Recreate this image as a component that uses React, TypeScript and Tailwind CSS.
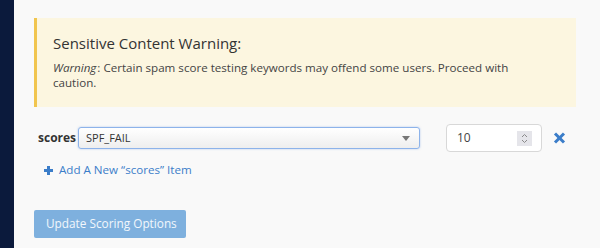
import React from 'react';

const ScoreRow: React.FC<{ label: string; value: string; score: number }> = ({ label, value, score }) => (
  <div className="flex items-center mt-[17px] pl-[4px]">
    <span className="w-[40px] shrink-0 text-[12px] font-bold text-[#333]">{label}</span>
    <div className="w-[342px] h-[22px] flex items-center justify-between pl-[7px] pr-[9px] border border-[#8db3ea] rounded-[3px] bg-gradient-to-b from-white to-[#eeeeee] shadow-[0_0_2px_rgba(100,150,230,0.5)]">
      <span className="text-[11px] text-[#333]">{value}</span>
      <span className="w-0 h-0 border-l-[4px] border-r-[4px] border-t-[5px] border-l-transparent border-r-transparent border-t-[#777]" />
    </div>
    <div className="ml-[26px] w-[96px] h-[28px] flex items-center justify-between pl-[10px] pr-[9px] bg-white border border-[#d8d8d8] rounded-[4px]">
      <span className="text-[12px] text-[#444]">{score}</span>
      <div className="w-[15px] h-[15px] bg-[#e5e5ea] flex flex-col items-center justify-center">
        <svg width="7" height="11" viewBox="0 0 7 11" fill="none" stroke="#8a8a8a" strokeWidth="1">
          <path d="M1 4 L3.5 1.5 L6 4" />
          <path d="M1 7 L3.5 9.5 L6 7" />
        </svg>
      </div>
    </div>
    <svg className="ml-[11px]" width="13" height="12" viewBox="0 0 13 12" fill="none" stroke="#3b7dc9" strokeWidth="3">
      <path d="M2 1.5 L11 10.5" />
      <path d="M11 1.5 L2 10.5" />
    </svg>
  </div>
);

const App: React.FC = () => {
  return (
    <div className="flex w-full h-[248px] overflow-hidden font-['Open_Sans',sans-serif]">
      <div className="w-[14px] shrink-0 bg-[#0b1a3c]" />
      <div className="flex-1 bg-[#f9f9f9] pl-[20px] pr-[24px] pt-[18px]">
        <div className="bg-[#fcf6e0] border-l-[3px] border-[#f1c54e] pl-[16px] pt-[14px] pb-[17px]">
          <h3 className="text-[15px] leading-[22px] text-[#333]">Sensitive Content Warning:</h3>
          <p className="mt-[6px] text-[11.6px] leading-[15px] text-[#444]">
            <em className="pr-[1px]">Warning</em>: Certain spam score testing keywords may offend some users. Proceed with
            <br />
            caution.
          </p>
        </div>

        <ScoreRow label="scores" value="SPF_FAIL" score={10} />

        <div className="mt-[10px] pl-[10px] flex items-center gap-[6px] text-[11.6px] leading-[16px] text-[#3b7dc9]">
          <svg width="9" height="9" viewBox="0 0 9 9" fill="#3b7dc9">
            <rect x="3" y="0" width="3" height="9" />
            <rect x="0" y="3" width="9" height="3" />
          </svg>
          <span>Add A New “scores” Item</span>
        </div>

        <button className="mt-[32px] w-[152px] h-[28px] rounded-[2px] bg-[#7eb0de] text-[11.8px] whitespace-nowrap text-white/90 text-left pl-[12px]">
          Update Scoring Options
        </button>
      </div>
    </div>
  );
};

export default App;
